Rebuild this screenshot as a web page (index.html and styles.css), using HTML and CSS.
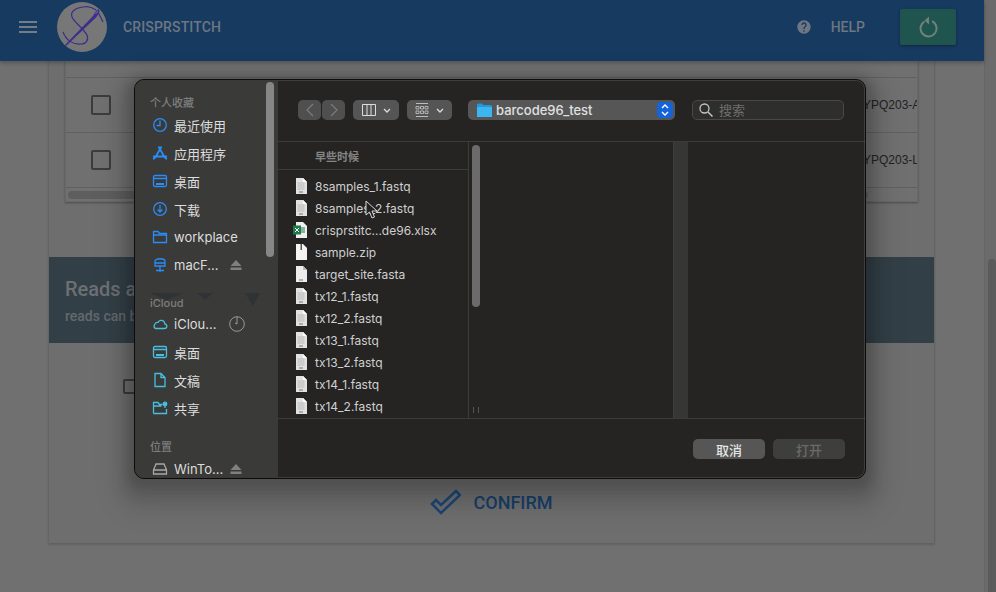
FILE: index.html
```html
<!DOCTYPE html>
<html lang="en">
<head>
  <meta charset="UTF-8">
  <title>CRISPRStitch</title>
  <link rel="stylesheet" href="styles.css">
</head>
<body>

  <svg class="sprite" width="0" height="0">
    <symbol id="doc" viewBox="0 0 12 16">
      <path d="M1 0h7l4 4v12H1z" fill="#e2e2e2"/>
      <path d="M8 0l4 4H8z" fill="#fff"/>
      <path d="M2.500 5h7M2.500 7h7M2.500 9h7M2.500 11h7" stroke="#b8b8b8" stroke-width="1"/>
      <path d="M4 14h4" stroke="#777" stroke-width="1"/>
    </symbol>
    <symbol id="plain" viewBox="0 0 12 16">
      <path d="M1 0h7l4 4v12H1z" fill="#ececec"/>
      <path d="M8 0l4 4H8z" fill="#bbb"/>
      <path d="M4 14h4" stroke="#777" stroke-width="1"/>
    </symbol>
  </svg>

  <div class="app">
    <header class="appbar">
      <button class="menu-btn" aria-label="menu">
        <span></span><span></span><span></span>
      </button>
      <svg class="logo" width="50" height="50" viewBox="0 0 50 50">
        <circle cx="25" cy="25" r="25" fill="#777"/>
        <path d="M39 8C35 5 30 4 26 5C18 6 13 10 15 15C17 20 26 26 30 33C32 38 29 42 24 42C16 43 9 38 6 30" fill="none" stroke="#3b2e8c" stroke-width="1.200"/>
        <path d="M40 8L46 20" fill="none" stroke="#3b2e8c" stroke-width="1.200"/>
        <path d="M8 43L36 14C38 10 40 8 42 7C43 9 42 12 39 15.500L9 44z" fill="#3b2e8c"/>
        <path d="M38.500 12L41 9" stroke="#777" stroke-width="1"/>
      </svg>
      <span class="brand">CRISPRSTITCH</span>
      <span class="spacer"></span>
      <svg class="help-icon" width="16" height="16" viewBox="0 0 24 24">
        <path fill="#6d7682" d="M12 2C6.480 2 2 6.480 2 12s4.480 10 10 10 10-4.480 10-10S17.520 2 12 2zm1 17h-2v-2h2v2zm2.070-7.750l-.9.920C13.450 12.900 13 13.500 13 15h-2v-.5c0-1.100.45-2.100 1.170-2.830l1.240-1.260c.37-.36.59-.86.59-1.410 0-1.100-.9-2-2-2s-2 .9-2 2H8c0-2.210 1.790-4 4-4s4 1.790 4 4c0 .88-.36 1.680-.93 2.250z"/>
      </svg>
      <span class="help">HELP</span>
      <button class="refresh-btn" aria-label="refresh">
        <svg width="20" height="24" viewBox="0 0 20 24">
          <path d="M6.500 6.500A8 8 0 1 0 14 6.200" fill="none" stroke="#70807a" stroke-width="2"/>
          <path d="M11 1.500L6.500 5.500l4.500 4z" fill="#70807a"/>
        </svg>
      </button>
    </header>

    <main class="content">
      <section class="card">
        <div class="table-card">
          <div class="table-head"></div>
          <div class="table-row">
            <span class="checkbox"></span>
            <span class="cell-end">YPQ203-A</span>
          </div>
          <div class="table-row">
            <span class="checkbox"></span>
            <span class="cell-end">YPQ203-L</span>
          </div>
          <div class="table-scroll"><span class="table-thumb"></span></div>
        </div>

        <div class="banner">
          <h2>Reads a</h2>
          <p>reads can b</p>
        </div>

        <div class="card-body">
          <span class="checkbox small"></span>
          <button class="confirm-btn">
            <svg width="31" height="26" viewBox="0 0 31 26">
              <path d="M2 15l4-4 5 5L26 2l4 4L11 24z" fill="none" stroke="#1c4674" stroke-width="2.500"/>
            </svg>
            CONFIRM
          </button>
        </div>
      </section>
    </main>
  </div>

  <div class="page-scroll"><span class="page-thumb"></span></div>

  <div class="dialog">
    <aside class="sidebar">
      <span class="side-thumb"></span>
      <svg class="side-smudge" width="115" height="14" viewBox="0 0 115 14">
        <path d="M0 0h33L17 7zM47 0h16L55 7zM95 0h15L103 13z" fill="#2f3335"/>
      </svg>

      <div class="side-label">个人收藏</div>
      <div class="side-item">
        <svg class="side-icon blue" viewBox="0 0 16 16"><circle cx="8" cy="8" r="6.300"/><path d="M8 3.500V8.500H4.500"/></svg>
        最近使用
      </div>
      <div class="side-item">
        <svg class="side-icon blue" viewBox="0 0 16 16"><path d="M9.500 1.500L3 13M6.500 1.500L13 13M1 11.500h14M1 14l2-1M15 14l-2-1" stroke-width="1.800"/></svg>
        应用程序
      </div>
      <div class="side-item">
        <svg class="side-icon blue" viewBox="0 0 16 16"><rect x="1.500" y="2.500" width="13" height="11" rx="1.500"/><path d="M1.500 5.500h13"/><path d="M4 11h8" stroke-width="2"/></svg>
        桌面
      </div>
      <div class="side-item">
        <svg class="side-icon blue" viewBox="0 0 16 16"><circle cx="8" cy="8" r="6.300"/><path d="M8 4v7M5.500 8.500L8 11l2.500-2.500"/></svg>
        下载
      </div>
      <div class="side-item">
        <svg class="side-icon blue" viewBox="0 0 16 16"><path d="M1.500 13.500v-11h4.500l1.500 2h7v9z"/><path d="M1.500 6h13"/></svg>
        workplace
      </div>
      <div class="side-item">
        <svg class="side-icon blue" viewBox="0 0 16 16"><path d="M3 9V4c0-3 10-3 10 0v5zM3 6h10M8 9v6M4 13.500h8"/></svg>
        macF...
        <svg class="eject" viewBox="0 0 12 10"><path d="M6 0l5.500 6H.5z"/><rect x=".5" y="7.500" width="11" height="2.500"/></svg>
      </div>

      <div class="side-label gap-cloud">iCloud</div>
      <div class="side-item">
        <svg class="side-icon cyan" viewBox="0 0 16 16"><path d="M4 12.500h8.500c3 0 3-4 .5-4.300C12.500 4 7.500 3 6 6.500 3 5.500 0 12 4 12.500z"/></svg>
        iClou...
        <svg class="progress" viewBox="0 0 16 16"><circle cx="8" cy="8" r="7.300"/><path d="M8 1v7l-2-1"/></svg>
      </div>
      <div class="side-item">
        <svg class="side-icon cyan" viewBox="0 0 16 16"><rect x="1.500" y="2.500" width="13" height="11" rx="1.500"/><path d="M1.500 5.500h13"/><path d="M4 11h8" stroke-width="2"/></svg>
        桌面
      </div>
      <div class="side-item">
        <svg class="side-icon cyan" viewBox="0 0 16 16"><path d="M3 1.500h6l4 4v9H3zM9 1.500v4h4"/></svg>
        文稿
      </div>
      <div class="side-item">
        <svg class="side-icon cyan" viewBox="0 0 16 16"><path d="M1.500 13.500v-11h4.500l1.500 2h3M14.500 9v4.500h-13M1.500 6h8"/><circle cx="13" cy="4" r="1.800" fill="#46c0e0"/><path d="M13 6v2"/></svg>
        共享
      </div>

      <div class="side-label gap-place">位置</div>
      <div class="side-item">
        <svg class="side-icon grey" viewBox="0 0 16 16"><path d="M1.500 9L4 3h8l2.500 6v4h-13zM1.500 9h13"/></svg>
        WinTo...
        <svg class="eject" viewBox="0 0 12 10"><path d="M6 0l5.500 6H.5z"/><rect x=".5" y="7.500" width="11" height="2.500"/></svg>
      </div>
    </aside>

    <div class="panel">
      <div class="toolbar">
        <div class="nav-group">
          <button class="tool-btn nav">
            <svg width="8" height="14" viewBox="0 0 8 14"><path d="M7 1L1 7l6 6" fill="none" stroke="#7b7b7b" stroke-width="1.200"/></svg>
          </button>
          <button class="tool-btn nav">
            <svg width="8" height="14" viewBox="0 0 8 14"><path d="M1 1l6 6-6 6" fill="none" stroke="#7b7b7b" stroke-width="1.200"/></svg>
          </button>
        </div>
        <button class="tool-btn view">
          <svg width="14" height="12" viewBox="0 0 14 12"><path d="M.5.500h13v11H.5zM5 .5v11M9 .5v11" fill="none" stroke="#dcdcdc"/></svg>
          <svg class="chev" width="8" height="5" viewBox="0 0 8 5"><path d="M1 1l3 3 3-3" fill="none" stroke="#dcdcdc" stroke-width="1.300"/></svg>
        </button>
        <button class="tool-btn group">
          <svg width="14" height="14" viewBox="0 0 14 14"><path d="M1 .5h12M1 13.500h12" stroke="#bbb"/><path d="M1 3.500h3v2.500H1zM5.500 3.500h3v2.500h-3zM10 3.500h3v2.500h-3zM1 8h3v2.500H1zM5.500 8h3v2.500h-3zM10 8h3v2.500h-3z" fill="none" stroke="#bbb" stroke-width=".9"/></svg>
          <svg class="chev" width="8" height="5" viewBox="0 0 8 5"><path d="M1 1l3 3 3-3" fill="none" stroke="#dcdcdc" stroke-width="1.300"/></svg>
        </button>
        <div class="path-popup">
          <svg width="15" height="14" viewBox="0 0 15 14"><path d="M0 2q0-1.500 1.500-1.500h3.500l1.500 1.500h7q1.500 0 1.500 1.500V14H0z" fill="#1e9ae0"/><path d="M0 4h15v10H0z" fill="#3cb6f0"/></svg>
          <span class="path-name">barcode96_test</span>
          <span class="stepper">
            <svg width="10" height="14" viewBox="0 0 10 14"><path d="M2 5l3-3 3 3M2 9l3 3 3-3" fill="none" stroke="#fff" stroke-width="1.400"/></svg>
          </span>
        </div>
        <div class="search">
          <svg width="14" height="14" viewBox="0 0 14 14"><circle cx="5.500" cy="5.500" r="4.500" fill="none" stroke="#c4c4c4" stroke-width="1.300"/><path d="M9 9l4.500 4.500" stroke="#c4c4c4" stroke-width="1.500"/></svg>
          <span class="search-text">搜索</span>
        </div>
      </div>

      <div class="columns">
        <div class="col-files">
          <div class="col-head">早些时候</div>
          <ul class="file-list">
            <li><svg class="file-icon"><use href="#doc"/></svg>8samples_1.fastq</li>
            <li><svg class="file-icon"><use href="#doc"/></svg>8samples_2.fastq</li>
            <li>
              <svg class="file-icon xls" viewBox="0 0 14 16"><path d="M3 0h7l4 4v12H3z" fill="#f0f0f0"/><path d="M8 6h4M8 8h4M8 10h4" stroke="#1e7a46"/><rect y="3.500" width="8" height="9" fill="#1e7a46"/><path d="M2 6l4 4M6 6l-4 4" stroke="#fff"/></svg>
              crisprstitc...de96.xlsx
            </li>
            <li>
              <svg class="file-icon" viewBox="0 0 12 16"><path d="M1 0h7l4 4v12H1z" fill="#f4f4f4"/><path d="M5.500 0h1.500v6H5.500z" fill="#555"/></svg>
              sample.zip
            </li>
            <li><svg class="file-icon"><use href="#plain"/></svg>target_site.fasta</li>
            <li><svg class="file-icon"><use href="#doc"/></svg>tx12_1.fastq</li>
            <li><svg class="file-icon"><use href="#doc"/></svg>tx12_2.fastq</li>
            <li><svg class="file-icon"><use href="#doc"/></svg>tx13_1.fastq</li>
            <li><svg class="file-icon"><use href="#doc"/></svg>tx13_2.fastq</li>
            <li><svg class="file-icon"><use href="#doc"/></svg>tx14_1.fastq</li>
            <li><svg class="file-icon"><use href="#doc"/></svg>tx14_2.fastq</li>
          </ul>
        </div>
        <div class="col-scroll">
          <span class="col-thumb"></span>
          <span class="col-grip"></span>
        </div>
        <div class="col-middle"></div>
        <div class="col-strip"></div>
        <div class="col-last"></div>
      </div>

      <div class="dialog-foot">
        <button class="foot-btn">取消</button>
        <button class="foot-btn off">打开</button>
      </div>
    </div>
  </div>

  <svg class="cursor" width="13" height="19" viewBox="0 0 13 19">
    <path d="M1 1v14l3.500-3 2.500 6 2.500-1-2.500-6H12z" fill="#222" stroke="#d8d8d8" stroke-width="1"/>
  </svg>

</body>
</html>
```

FILE: styles.css
```css
* {
  box-sizing: border-box;
}

html, body {
  margin: 0;
  height: 100%;
  overflow: hidden;
}

body {
  display: flex;
  background: #707070;
  font-family: Roboto, "Noto Sans CJK SC", sans-serif;
}

button {
  border: 0;
  padding: 0;
  font: inherit;
}

.sprite {
  position: absolute;
}

.app {
  width: 984px;
  flex: none;
  display: flex;
  flex-direction: column;
}

/* app bar */
.appbar {
  height: 61px;
  flex: none;
  display: flex;
  align-items: center;
  padding: 0 28px 7px 19px;
  background: #163a60;
  box-shadow: 0 2px 4px rgba(0, 0, 0, 0.25);
  position: relative;
}

.menu-btn {
  width: 18px;
  display: flex;
  flex-direction: column;
  gap: 3px;
  background: none;
}

.menu-btn span {
  height: 2px;
  background: #747c87;
}

.logo {
  margin-left: 20px;
}

.brand {
  margin-left: 16px;
  font-size: 14px;
  font-weight: 500;
  letter-spacing: 0.15px;
  color: #6d7682;
}

.spacer {
  flex: 1;
}

.help {
  margin-left: 19px;
  font-size: 14px;
  font-weight: 500;
  color: #6d7682;
}

.refresh-btn {
  width: 56px;
  height: 36px;
  margin-left: 35px;
  display: flex;
  align-items: center;
  justify-content: center;
  border-radius: 2px;
  background: #20544f;
  box-shadow: 0 1px 3px rgba(0, 0, 0, 0.35);
}

/* page under the dialog */
.content {
  flex: 1;
  padding: 0 50px 0 49px;
}

.card {
  height: 482px;
  background: #6e6e6e;
  box-shadow: 0 1px 2px 1px rgba(0, 0, 0, 0.14);
  display: flex;
  flex-direction: column;
}

.table-card {
  margin: 0 16px;
  height: 141px;
  flex: none;
  background: #707070;
  border: 1px solid #686868;
  border-top: 0;
  box-shadow: 0 1px 2px rgba(0, 0, 0, 0.3);
  display: flex;
  flex-direction: column;
  overflow: hidden;
}

.table-head {
  height: 17px;
  flex: none;
  border-bottom: 1px solid #606060;
}

.table-row {
  height: 55px;
  flex: none;
  display: flex;
  align-items: center;
  justify-content: space-between;
  padding-left: 25px;
  border-bottom: 1px solid #606060;
  white-space: nowrap;
}

.checkbox {
  width: 20px;
  height: 20px;
  flex: none;
  border: 2px solid #3c3c3c;
  border-radius: 2px;
}

.cell-end {
  width: 54px;
  overflow: hidden;
  font-family: "Liberation Sans", sans-serif;
  font-size: 12px;
  color: #222;
}

.table-scroll {
  padding: 3px 2px;
}

.table-thumb {
  display: block;
  width: 800px;
  height: 8px;
  border-radius: 4px;
  background: #5e5e5e;
}

.banner {
  margin-top: 55px;
  height: 86px;
  flex: none;
  padding: 20px 16px 0;
  background: #333f47;
  white-space: nowrap;
}

.banner h2 {
  margin: 0;
  font-size: 20px;
  font-weight: 500;
  line-height: 24px;
  color: #6c7074;
}

.banner p {
  margin: 7px 0 0;
  font-size: 14px;
  font-weight: 500;
  line-height: 16px;
  color: #62696e;
}

.card-body {
  flex: 1;
  display: flex;
  flex-direction: column;
  align-items: center;
  position: relative;
}

.checkbox.small {
  align-self: flex-start;
  margin: 36px 0 0 74px;
  width: 16px;
  height: 15px;
}

.confirm-btn {
  margin-top: 95px;
  display: flex;
  align-items: center;
  gap: 12px;
  background: none;
  font-size: 18px;
  font-weight: 500;
  color: #173e68;
}

/* window scrollbar */
.page-scroll {
  width: 12px;
  flex: none;
  background: #6b6b6b;
  border-left: 1px solid #666;
  padding: 259px 0 0 3px;
}

.page-thumb {
  display: block;
  height: 340px;
  border-radius: 4px;
  background: #5b5b5b;
}

/* file picker */
.dialog {
  position: absolute;
  left: 134px;
  top: 79px;
  width: 732px;
  height: 400px;
  display: flex;
  overflow: hidden;
  border: 1px solid #0c0c0c;
  border-radius: 10px;
  background: #252423;
  font-family: Inter, "Noto Sans CJK SC", sans-serif;
  outline: 1px solid rgba(255, 255, 255, 0.12);
  outline-offset: -2px;
  box-shadow: 0 4px 8px 6px rgba(0, 0, 0, 0.12), 0 10px 14px 14px rgba(0, 0, 0, 0.1), 0 14px 24px 22px rgba(0, 0, 0, 0.06);
}

.sidebar {
  width: 143px;
  flex: none;
  position: relative;
  overflow: hidden;
  padding: 15px 0 0 15px;
  background: #3a3a39;
}

.side-thumb {
  position: absolute;
  left: 131px;
  top: 2px;
  width: 8px;
  height: 175px;
  border-radius: 4px;
  background: #868686;
}

.side-smudge {
  position: absolute;
  left: 15px;
  top: 213px;
}

.side-label {
  height: 16px;
  line-height: 16px;
  font-size: 11px;
  font-weight: 500;
  color: #7e7e7e;
  position: relative;
}

.side-label.gap-cloud {
  margin: 16px 0 -1px;
}

.side-label.gap-place {
  margin-top: 17px;
}

.side-item {
  height: 28px;
  margin-left: 2px;
  display: flex;
  align-items: center;
  gap: 6px;
  font-size: 13px;
  color: #dddddd;
  white-space: nowrap;
}

.side-icon {
  width: 16px;
  height: 16px;
  flex: none;
  fill: none;
  stroke-width: 1.300;
}

.side-icon.blue {
  stroke: #2a8cf5;
}

.side-icon.cyan {
  stroke: #46c0e0;
}

.side-icon.grey {
  stroke: #a8a8a8;
}

.eject {
  position: absolute;
  left: 95px;
  width: 12px;
  height: 10px;
  fill: #808080;
}

.progress {
  position: absolute;
  left: 94px;
  width: 16px;
  height: 16px;
  fill: none;
  stroke: #a4a4a4;
  stroke-width: 0.9;
}

.panel {
  flex: 1;
  min-width: 0;
  display: flex;
  flex-direction: column;
}

.toolbar {
  height: 62px;
  flex: none;
  display: flex;
  align-items: flex-start;
  padding: 20px 0 0 20px;
  border-bottom: 1px solid #3b3b3a;
}

.tool-btn {
  height: 20px;
  display: flex;
  align-items: center;
  justify-content: center;
  border-radius: 5px;
  background: #555;
}

.nav-group {
  display: flex;
  gap: 1px;
}

.tool-btn.nav {
  width: 23px;
  background: #4f4f4f;
}

.tool-btn.view {
  width: 46px;
  margin-left: 8px;
  gap: 7px;
}

.tool-btn.group {
  width: 45px;
  margin-left: 8px;
  gap: 7px;
}

.path-popup {
  width: 207px;
  height: 20px;
  margin-left: 16px;
  display: flex;
  align-items: center;
  gap: 4px;
  padding: 0 2px 0 9px;
  border-radius: 5px;
  background: #565656;
}

.path-name {
  flex: 1;
  font-size: 13px;
  font-weight: 500;
  color: #e0e0e0;
}

.stepper {
  width: 16px;
  height: 16px;
  display: flex;
  align-items: center;
  justify-content: center;
  border-radius: 4px;
  background: #1463d8;
}

.search {
  width: 152px;
  height: 20px;
  margin-left: 17px;
  display: flex;
  align-items: center;
  gap: 6px;
  padding: 0 0 1px 6px;
  border: 1px solid #484847;
  border-radius: 5px;
  background: #2e2e2d;
}

.search-text {
  font-size: 13px;
  color: #6e6e6e;
}

.columns {
  height: 277px;
  flex: none;
  display: flex;
  border-bottom: 1px solid #3b3b3a;
  overflow: hidden;
}

.col-files {
  width: 191px;
  flex: none;
  border-right: 1px solid #3b3b3a;
}

.col-head {
  height: 28px;
  padding: 8px 0 0 37px;
  border-bottom: 1px solid #3b3b3a;
  font-size: 11px;
  font-weight: 600;
  line-height: 14px;
  color: #858585;
}

.file-list {
  list-style: none;
  margin: 0;
  padding: 5px 0 0 17px;
}

.file-list li {
  height: 22px;
  display: flex;
  align-items: center;
  gap: 8px;
  font-size: 12px;
  color: #d0d0d0;
  white-space: nowrap;
}

.file-icon {
  width: 12px;
  height: 16px;
  flex: none;
}

.file-icon.xls {
  width: 14px;
  margin-left: -2px;
}

.col-scroll {
  width: 12px;
  flex: none;
  position: relative;
}

.col-thumb {
  position: absolute;
  left: 3px;
  top: 3px;
  width: 8px;
  height: 162px;
  border-radius: 4px;
  background: #6b6b6b;
}

.col-grip {
  position: absolute;
  left: 4px;
  top: 265px;
  width: 6px;
  height: 6px;
  border: solid #555;
  border-width: 0 1px;
}

.col-middle {
  width: 192px;
  flex: none;
}

.col-strip {
  width: 15px;
  flex: none;
  background: #363635;
  border-left: 1px solid #3f3f3e;
}

.col-last {
  flex: 1;
}

.dialog-foot {
  flex: 1;
  display: flex;
  justify-content: flex-end;
  gap: 8px;
  padding: 20px 20px 0 0;
}

.foot-btn {
  width: 72px;
  height: 20px;
  border-radius: 5px;
  background: #565656;
  font-size: 13px;
  font-weight: 500;
  color: #e6e6e6;
}

.foot-btn.off {
  background: #3e3e3d;
  color: #6a6a6a;
}

.cursor {
  position: absolute;
  left: 365px;
  top: 200px;
}
```
